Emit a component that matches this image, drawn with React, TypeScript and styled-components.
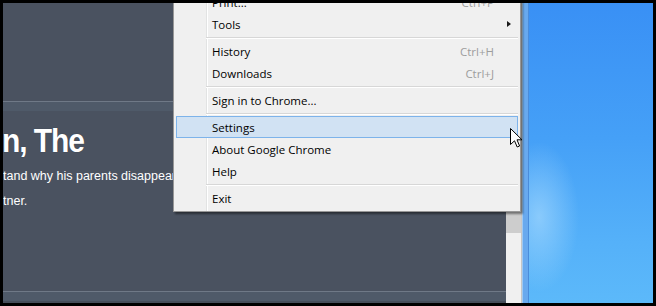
import React from 'react';
import styled, { createGlobalStyle } from 'styled-components';

const GlobalStyle = createGlobalStyle`
  html, body {
    margin: 0;
    padding: 0;
    background: #000;
  }
`;

const Screen = styled.div`
  position: relative;
  width: 656px;
  height: 306px;
  box-sizing: border-box;
  border: 3px solid #000;
  display: flex;
  overflow: hidden;
  background: #000;
`;

const Page = styled.div`
  position: relative;
  flex: 0 0 503px;
  display: flex;
  flex-direction: column;
  background: #4a5260;
  overflow: hidden;
`;

const TopArea = styled.div`
  height: 98px;
`;

const Band = styled.div<{ $bottom?: boolean }>`
  height: 9px;
  border-top: 1px solid #6f7987;
  background: #4f5a69;
  ${(props) => props.$bottom && 'box-shadow: inset 0 -2px 0 #464e5a; height: 11px;'}
`;

const Content = styled.div`
  flex: 1;
  padding-top: 13px;
  color: #fff;
  font-family: 'Liberation Sans', Arial, sans-serif;
`;

const Heading = styled.h1`
  margin: 0 0 0 -1px;
  font-size: 30px;
  line-height: 36px;
  font-weight: bold;
  letter-spacing: -1.1px;
  white-space: nowrap;
  transform: scaleY(1.08);
  transform-origin: 0 70%;
  text-shadow: 0 0 1px rgba(0, 0, 0, 0.3);
`;

const Blurb = styled.p`
  margin: 4px 0 0 0;
  font-size: 12.5px;
  line-height: 25px;
  white-space: nowrap;
`;

const Scrollbar = styled.div`
  flex: 0 0 15px;
  background: #f0f0f0;
  display: flex;
  flex-direction: column;
`;

const Thumb = styled.div`
  margin-top: 147px;
  height: 83px;
  background: #cdcdcd;
`;

const WindowEdge = styled.div`
  flex: 0 0 8px;
  background: linear-gradient(
    to right,
    #c6c6c6 0,
    #c6c6c6 1px,
    #9fc8f1 1px,
    #9fc8f1 2px,
    #68a9ee 2px,
    #68a9ee 7px,
    #4a8cdb 7px
  );
`;

const Desktop = styled.div`
  flex: 1;
  background:
    radial-gradient(ellipse 40px 75px at 10px 214px, rgba(175, 222, 255, 0.6), rgba(175, 222, 255, 0) 100%),
    linear-gradient(180deg, #3990f5 0%, #45a0f7 45%, #55b1f9 80%, #5cb9fa 100%);
`;

const Menu = styled.div`
  position: absolute;
  left: 170px;
  top: -13px;
  width: 348px;
  box-sizing: border-box;
  padding-bottom: 2px;
  border: 1px solid #979797;
  background:
    linear-gradient(
      to right,
      transparent 32px,
      #e2e3e3 32px,
      #e2e3e3 33px,
      #ffffff 33px,
      #ffffff 34px,
      transparent 34px
    ),
    #f0f0f0;
  box-shadow: 2px 2px 2px rgba(0, 0, 0, 0.45);
  font-family: 'Segoe UI', 'Open Sans', sans-serif;
  font-size: 11.5px;
  color: #000;
  z-index: 2;
`;

const Item = styled.div<{ $active?: boolean }>`
  display: flex;
  align-items: center;
  height: 22px;
  box-sizing: border-box;
  margin: 0 2px;
  padding: 0 23px 0 35px;
  border: 1px solid ${(props) => (props.$active ? '#7db3ea' : 'transparent')};
  background: ${(props) => (props.$active ? '#d1e2f3' : 'transparent')};
`;

const Label = styled.span`
  flex: 1;
  white-space: nowrap;
`;

const Shortcut = styled.span`
  color: #9d9d9d;
  white-space: nowrap;
`;

const SubArrow = styled.span`
  width: 0;
  height: 0;
  margin-right: -17px;
  border-left: 4px solid #1a1a1a;
  border-top: 3.5px solid transparent;
  border-bottom: 3.5px solid transparent;
`;

const Separator = styled.div`
  margin: 2px 2px 1px 32px;
  height: 0;
  border-top: 1px solid #d7d7d7;
  border-bottom: 1px solid #fff;
`;

const Cursor = styled.svg`
  position: absolute;
  left: 507px;
  top: 125px;
  z-index: 3;
`;

type Entry = { label: string; shortcut?: string; sub?: boolean; active?: boolean } | 'sep';

const entries: Entry[] = [
  { label: 'Print...', shortcut: 'Ctrl+P' },
  { label: 'Tools', sub: true },
  'sep',
  { label: 'History', shortcut: 'Ctrl+H' },
  { label: 'Downloads', shortcut: 'Ctrl+J' },
  'sep',
  { label: 'Sign in to Chrome...' },
  'sep',
  { label: 'Settings', active: true },
  { label: 'About Google Chrome' },
  { label: 'Help' },
  'sep',
  { label: 'Exit' },
];

export default function App() {
  return (
    <>
      <GlobalStyle />
      <Screen>
        <Page>
          <TopArea />
          <Band />
          <Content>
            <Heading>n, The</Heading>
            <Blurb>tand why his parents disappeared</Blurb>
            <Blurb style={{ marginTop: 0 }}>tner.</Blurb>
          </Content>
          <Band $bottom />
        </Page>
        <Scrollbar>
          <Thumb />
        </Scrollbar>
        <WindowEdge />
        <Desktop />

        <Menu>
          {entries.map((e, i) =>
            e === 'sep' ? (
              <Separator key={i} />
            ) : (
              <Item key={i} $active={e.active}>
                <Label>{e.label}</Label>
                {e.shortcut && <Shortcut>{e.shortcut}</Shortcut>}
                {e.sub && <SubArrow />}
              </Item>
            )
          )}
        </Menu>

        <Cursor width="13" height="21" viewBox="0 0 13 21">
          <path
            d="M0.5 0.5 L0.5 16.5 L4.5 12.8 L7.2 19 L9.6 18 L7 11.8 L12 11.8 Z"
            fill="#fff"
            stroke="#000"
            strokeWidth="1"
            strokeLinejoin="miter"
          />
        </Cursor>
      </Screen>
    </>
  );
}
